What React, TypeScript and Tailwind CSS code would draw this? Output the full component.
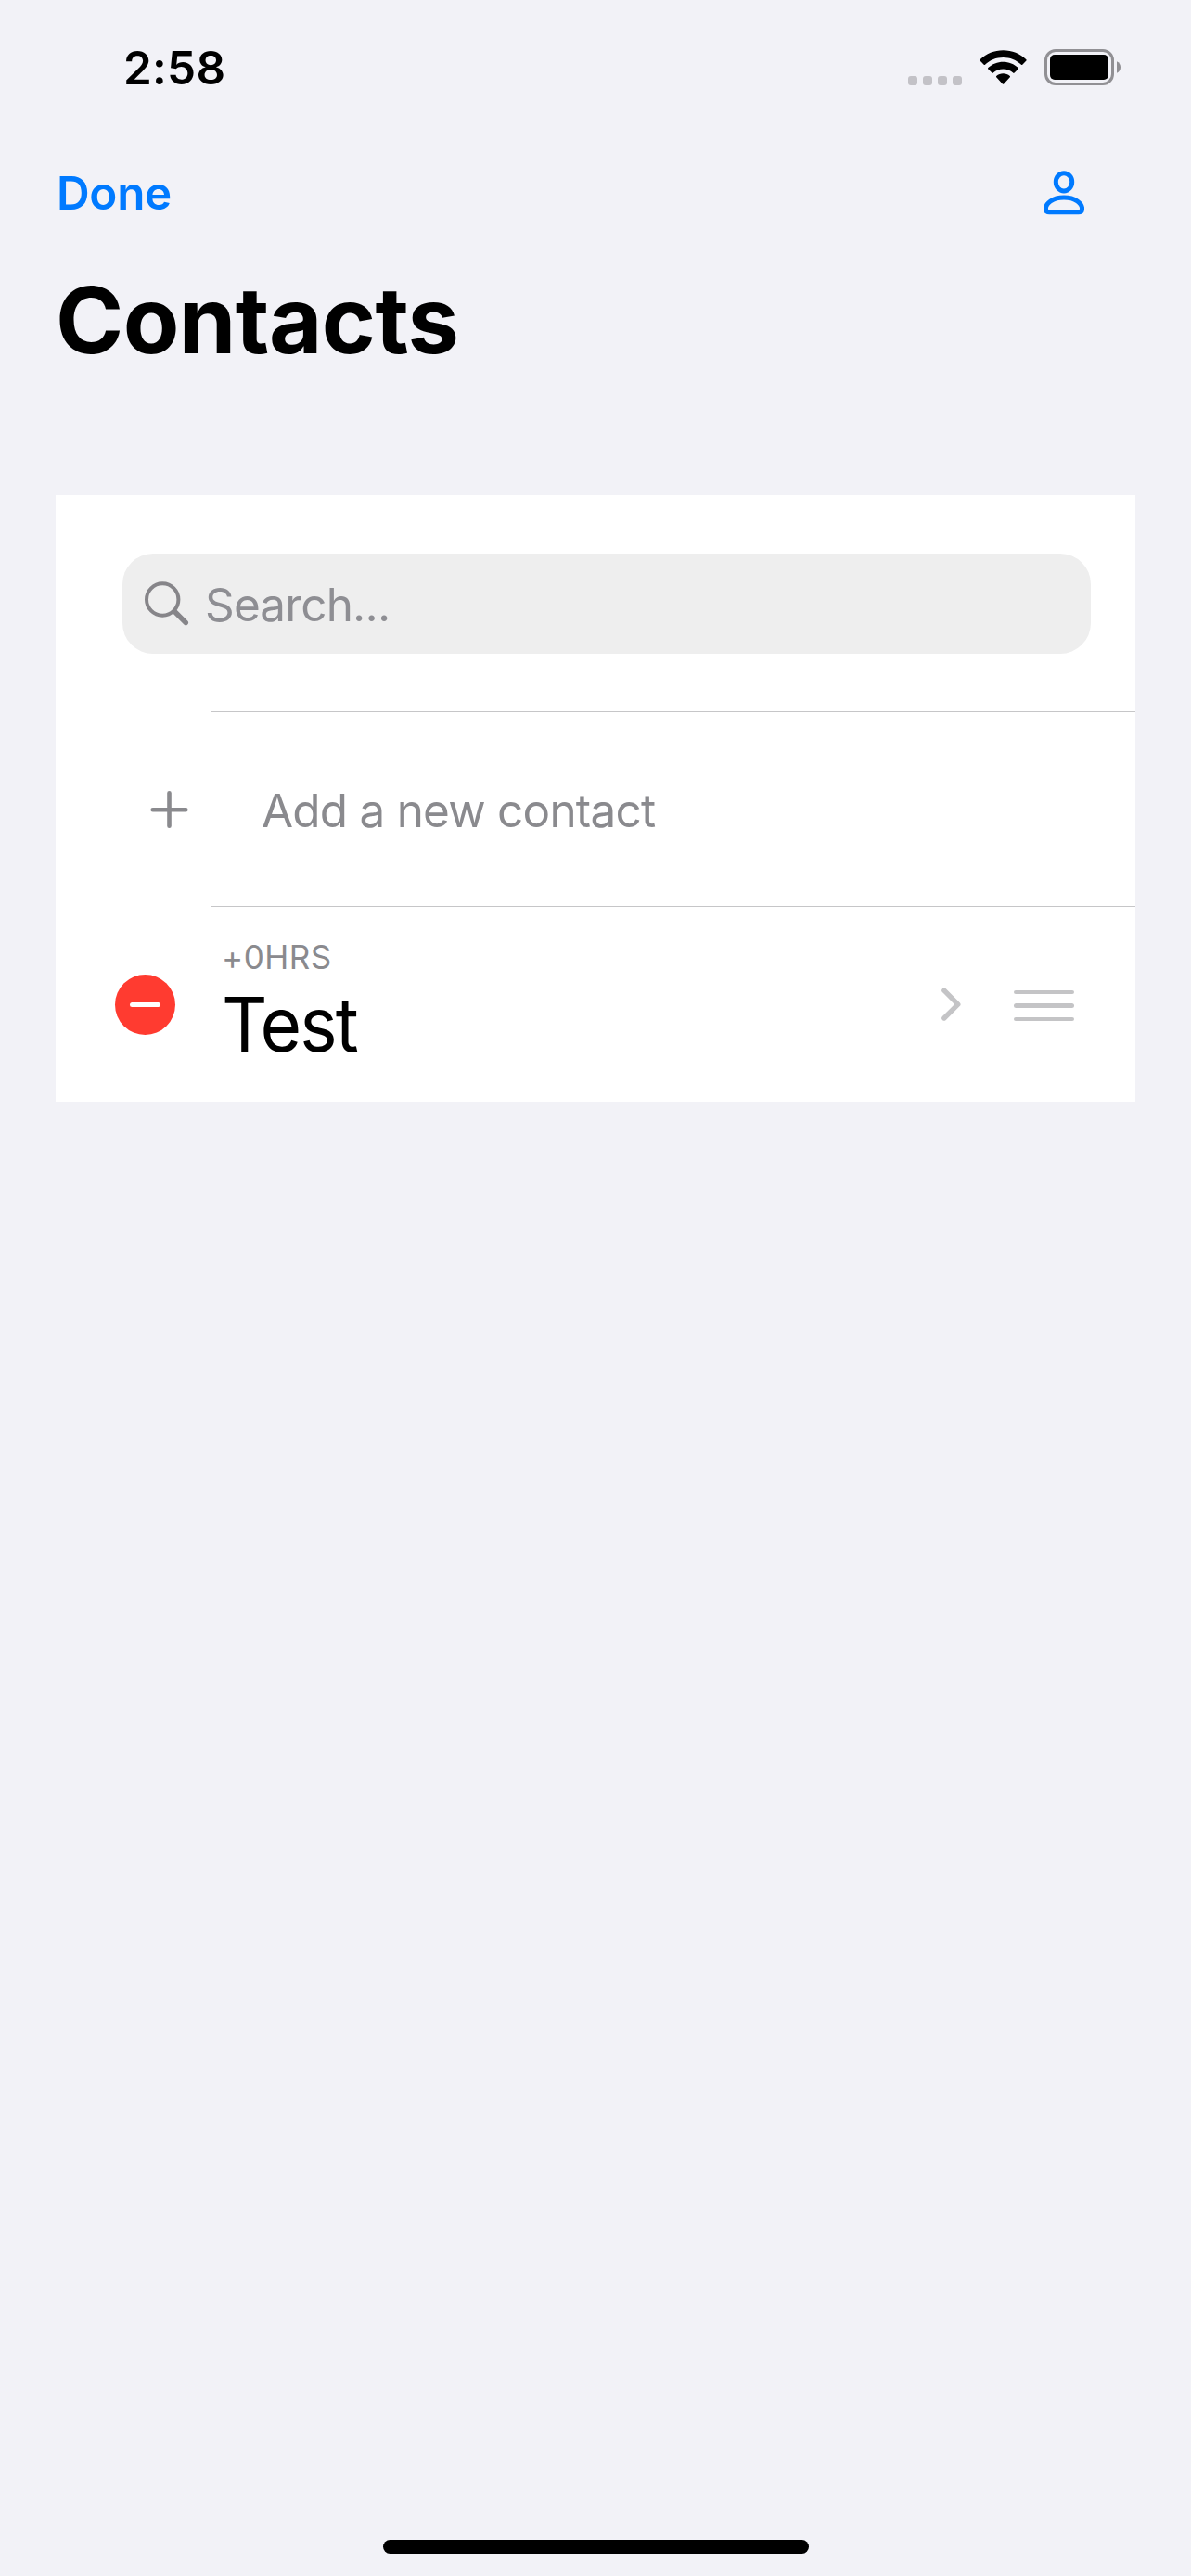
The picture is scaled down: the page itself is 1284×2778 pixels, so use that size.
function StatusBar() {
  return (
    <header className="flex h-[146px] items-center justify-between pl-[133px] pr-[76px]">
      <time className="text-[49.4px] leading-[60px] font-semibold tracking-[0.3px]">2:58</time>
      <div className="flex h-[38px] items-center">
        <div className="mr-[19px] flex gap-[6px] self-end">
          {[0, 1, 2, 3].map((dot) => (
            <span key={dot} className="size-[10px] rounded-[3px] bg-[#c3c2c7]" />
          ))}
        </div>
        <svg className="mr-[19px] h-[38px] w-[51px]" viewBox="0 0 51 38" fill="#000">
          <path d="M.6 10.2C7.2 3.7 16 .2 25.5 .2S43.800 3.700 50.400 10.200C50.800 10.600 50.800 11.200 50.400 11.600L46.300 15.700C45.900 16.100 45.400 16.100 45 15.700C39.700 10.700 32.900 8 25.500 8S11.300 10.700 6 15.700C5.600 16.100 5.100 16.100 4.700 15.700L.6 11.600C.2 11.200 .2 10.600 .6 10.200Z" />
          <path d="M9.300 19.100C13.700 15.100 19.400 12.800 25.500 12.800S37.300 15.100 41.700 19.100C42.100 19.500 42.100 20.100 41.700 20.500L37.600 24.600C37.200 25 36.600 25 36.200 24.600C33.300 22 29.500 20.500 25.500 20.500S17.700 22 14.800 24.600C14.400 25 13.800 25 13.400 24.600L9.300 20.500C8.900 20.100 8.900 19.500 9.300 19.100Z" />
          <path d="M18.200 27.900C20.200 26.200 22.800 25.200 25.500 25.200S30.800 26.200 32.800 27.900C33.200 28.300 33.200 28.900 32.800 29.300L26.200 36.500C25.800 36.900 25.200 36.900 24.800 36.500L18.200 29.300C17.800 28.900 17.800 28.300 18.200 27.900Z" />
        </svg>
        <svg className="mb-[1px] h-[39px] w-[82px]" viewBox="0 0 82 39">
          <rect x="1.500" y="1.500" width="72" height="36" rx="10.500" fill="none" stroke="#919094" strokeWidth="3" />
          <rect x="6" y="6" width="63" height="27" rx="5" fill="#000" />
          <path d="M78 13.300C80.500 14.300 82 16.700 82 19.500S80.500 24.700 78 25.700Z" fill="#919094" />
        </svg>
      </div>
    </header>
  );
}

function NavBar() {
  return (
    <nav className="flex h-[124px] items-center justify-between pr-[115px] pl-[61px] text-[#007aff]">
      <button className="text-[49.4px] leading-[60px] font-semibold tracking-[-0.3px]">Done</button>
      <button aria-label="Profile">
        <svg className="block h-[48px] w-[44px]" viewBox="0 0 44 48" fill="none" stroke="#007aff" strokeWidth="5">
          <ellipse cx="22" cy="12.300" rx="8.700" ry="9.600" />
          <path d="M6.200 44.700H37.800C40.300 44.700 41.600 43.200 41.600 41C41.600 35.500 34.500 29 22 29S2.400 35.500 2.400 41C2.400 43.200 3.700 44.700 6.200 44.700Z" />
        </svg>
      </button>
    </nav>
  );
}

function SearchField() {
  return (
    <div className="mr-[48px] ml-[72px] flex h-[108px] items-center rounded-[33px] bg-[#eeeeee] pl-[24px]">
      <svg className="mr-[17px] h-[48px] w-[48px]" viewBox="0 0 48 48" fill="none" stroke="#868589">
        <circle cx="19.200" cy="19.500" r="17.200" strokeWidth="4" />
        <path d="M32.300 32.500L44.300 44.500" strokeWidth="5.400" strokeLinecap="round" />
      </svg>
      <span className="pt-[2px] text-[49.4px] leading-[60px] tracking-[-0.8px] text-[#8e8e93]">Search...</span>
    </div>
  );
}

function AddRow() {
  return (
    <div className="flex h-[209px] items-center pl-[101px] text-[#8a8a8e]">
      <svg className="mr-[79px] h-[42px] w-[42px]" viewBox="0 0 42 42" stroke="#8a8a8e" strokeWidth="4.600" strokeLinecap="round">
        <path d="M21.500 3.300V38.700M3.700 21.300H39.300" />
      </svg>
      <span className="pt-[3px] text-[49.4px] leading-[60px] tracking-[-0.74px]">Add a new contact</span>
    </div>
  );
}

function ContactRow() {
  return (
    <div className="flex h-[210px] items-center pr-[66px] pl-[64px]">
      <button aria-label="Remove" className="mr-[50px] flex size-[65px] items-center justify-center rounded-full bg-[#ff3b30]">
        <span className="h-[5px] w-[33px] rounded-full bg-white" />
      </button>
      <div className="flex flex-1 flex-col">
        <span className="pb-[2px] text-[35px] leading-[42px] tracking-[0.5px] text-[#8a8a8e]">+0HRS</span>
        <span className="origin-left scale-x-[0.94] text-[81.4px] leading-[100px] tracking-[-2px]">Test</span>
      </div>
      <svg className="mr-[57px] h-[36px] w-[21px]" viewBox="0 0 21 36" fill="none" stroke="#c4c4c6" strokeWidth="5.400" strokeLinecap="round" strokeLinejoin="round">
        <path d="M2.900 3.200L17.800 18.200L2.900 33" />
      </svg>
      <div className="flex flex-col gap-[10px] pt-[3px]">
        {[0, 1, 2].map((line) => (
          <span key={line} className="h-[4.5px] w-[65px] rounded-full bg-[#c4c4c6]" />
        ))}
      </div>
    </div>
  );
}

export default function App() {
  return (
    <div className="flex h-[2778px] w-[1284px] flex-col bg-[#f2f2f7] font-[Inter,sans-serif] text-black">
      <StatusBar />
      <NavBar />
      <h1 className="flex h-[150px] items-center pl-[60px] text-[99px] leading-[120px] font-bold tracking-[-0.6px]">
        Contacts
      </h1>
      <main className="mx-[60px] mt-[114px] flex-1">
        <section className="bg-white">
          <div className="flex h-[233px] flex-col justify-center">
            <SearchField />
          </div>
          <hr className="ml-[168px] border-[#c6c6c8]" />
          <AddRow />
          <hr className="ml-[168px] border-[#c6c6c8]" />
          <ContactRow />
        </section>
      </main>
      <div className="mx-auto mb-[24px] h-[15px] w-[459px] rounded-full bg-black" />
    </div>
  );
}
